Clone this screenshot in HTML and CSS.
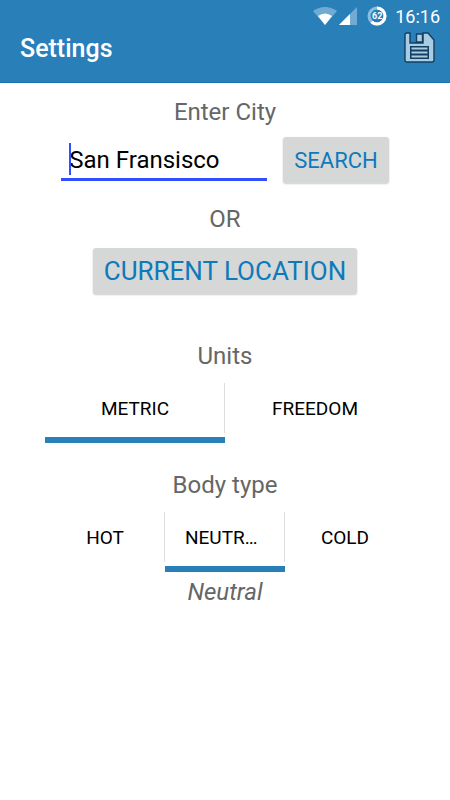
FILE: index.html
```html
<!DOCTYPE html>
<html lang="en">
<head>
<meta charset="utf-8">
<meta name="viewport" content="width=device-width, initial-scale=1">
<title>Settings</title>
<link rel="stylesheet" href="styles.css">
</head>
<body>
<header class="header">
  <div class="status">
    <svg class="wifi" width="24" height="18" viewBox="0 0 24 18" aria-hidden="true">
      <path d="M0 4Q12-4 24 4L12 18Z" fill="#71abd3"/>
      <path d="M5 9Q12 4 19 9L12 18Z" fill="#fff"/>
    </svg>
    <svg class="signal" width="18" height="18" viewBox="0 0 18 18" aria-hidden="true">
      <path d="M0 18L18 0V18Z" fill="#71abd3"/>
      <path d="M0 18L11 7V18Z" fill="#fff"/>
    </svg>
    <div class="battery">
      <svg width="20" height="20" viewBox="0 0 20 20" aria-hidden="true">
        <circle cx="10" cy="10" r="8" fill="none" stroke="#8fbddd" stroke-width="3"/>
        <circle cx="10" cy="10" r="8" fill="none" stroke="#fff" stroke-width="3" pathLength="100" stroke-dasharray="62 38" transform="rotate(-90 10 10)"/>
      </svg>
      <span class="battery-level">62</span>
    </div>
    <span class="clock">16:16</span>
  </div>
  <div class="appbar">
    <h1 class="title">Settings</h1>
    <button class="save" type="button" aria-label="Save">
      <svg width="32" height="32" viewBox="0 0 32 32" aria-hidden="true">
        <path d="M3 1H6V11H19V1H24L30 8V28Q30 30 28 30H3Q1 30 1 28V3Q1 1 3 1Z" fill="#a9cce3" stroke="#123f63" stroke-width="1.4"/>
        <path d="M12.5 2H18.5V10H12.5Z" fill="#a9cce3" stroke="#123f63" stroke-width="1.4"/>
        <path d="M6 14H25V27H6Z" fill="#123f63"/>
        <path d="M7.5 16.5H23.5M7.5 20.5H23.5M7.5 24.500H23.5" stroke="#a9cce3" stroke-width="2"/>
      </svg>
    </button>
  </div>
</header>
<main class="content">
  <label class="label" for="city">Enter City</label>
  <form class="search-row">
    <div class="field">
      <input class="city" id="city" type="text" value="San Fransisco">
      <span class="caret"></span>
    </div>
    <button class="btn" type="button">SEARCH</button>
  </form>
  <p class="label">OR</p>
  <button class="btn btn-large" type="button">CURRENT LOCATION</button>
  <h2 class="label units-label">Units</h2>
  <div class="tabs" role="tablist" aria-label="Units">
    <button class="tab selected" type="button" role="tab" aria-selected="true"><span class="tab-text">METRIC</span></button>
    <button class="tab" type="button" role="tab" aria-selected="false"><span class="tab-text">FREEDOM</span></button>
  </div>
  <h2 class="label body-label">Body type</h2>
  <div class="tabs" role="tablist" aria-label="Body type">
    <button class="tab" type="button" role="tab" aria-selected="false"><span class="tab-text">HOT</span></button>
    <button class="tab selected" type="button" role="tab" aria-selected="true"><span class="tab-text">NEUTRAL</span></button>
    <button class="tab" type="button" role="tab" aria-selected="false"><span class="tab-text">COLD</span></button>
  </div>
  <p class="label value">Neutral</p>
</main>
</body>
</html>
```
FILE: styles.css
```css
* {
  box-sizing: border-box;
}

body {
  margin: 0;
  background: #fff;
  color: #000;
  font-family: Roboto, "Liberation Sans", sans-serif;
}

button,
input {
  margin: 0;
  padding: 0;
  border: 0;
  background: none;
  color: inherit;
  font: inherit;
}

.header {
  background: #2980b9;
  border-bottom: 1px solid #1874b0;
  color: #fff;
}

.status {
  display: flex;
  justify-content: flex-end;
  align-items: center;
  height: 32px;
  padding-right: 10px;
}

.signal {
  margin: 0 10px 0 2px;
}

.battery {
  position: relative;
  width: 20px;
  height: 20px;
  margin-right: 8px;
}

.battery svg {
  display: block;
}

.battery-level {
  position: absolute;
  inset: 0;
  font-size: 9px;
  font-weight: 700;
  line-height: 20px;
  text-align: center;
}

.clock {
  font-size: 18px;
  font-weight: 400;
}

.appbar {
  display: flex;
  justify-content: space-between;
  align-items: flex-start;
  height: 50px;
  padding: 0 14px 0 20px;
}

.title {
  margin: 0;
  font-size: 25px;
  font-weight: 500;
  line-height: 34px;
}

.save {
  width: 32px;
  height: 32px;
}

.save svg {
  display: block;
}

.content {
  display: flex;
  flex-direction: column;
  align-items: center;
  padding: 15px 45px;
}

.label {
  margin: 0;
  color: #666;
  font-size: 24px;
  font-weight: 400;
  line-height: 28px;
}

.search-row {
  display: flex;
  gap: 16px;
  margin: 11px 0 22px;
}

.field {
  position: relative;
  width: 206px;
  height: 44px;
}

.city {
  width: 100%;
  height: 44px;
  padding: 4px 8px 0;
  border-bottom: 3px solid #304ffe;
  font-size: 24px;
  outline: 0;
}

.caret {
  position: absolute;
  top: 6px;
  left: 8px;
  width: 2px;
  height: 32px;
  background: #304ffe;
}

.btn {
  height: 46px;
  padding: 0 11px;
  border-radius: 3px;
  background: #d6d7d7;
  box-shadow: 0 1px 2px #0003;
  color: #0c7abb;
  font-size: 22px;
}

.btn-large {
  margin-top: 15px;
  font-size: 26px;
}

.units-label {
  margin-top: 48px;
}

.body-label {
  margin-top: 28px;
}

.tabs {
  display: flex;
  width: 100%;
  margin-top: 13px;
}

.tab {
  position: relative;
  flex: 1;
  min-width: 0;
  height: 60px;
  padding: 0 20px 4px;
  border-bottom: 6px solid transparent;
  font-size: 19px;
}

.tab.selected {
  border-color: #2980b9;
}

.tab + .tab::before {
  content: "";
  position: absolute;
  top: 0;
  left: -1px;
  width: 1px;
  height: 50px;
  background: #ddd;
}

.tab-text {
  display: block;
  overflow: hidden;
  text-overflow: ellipsis;
  white-space: nowrap;
}

.value {
  margin-top: 6px;
  font-style: italic;
}
```
